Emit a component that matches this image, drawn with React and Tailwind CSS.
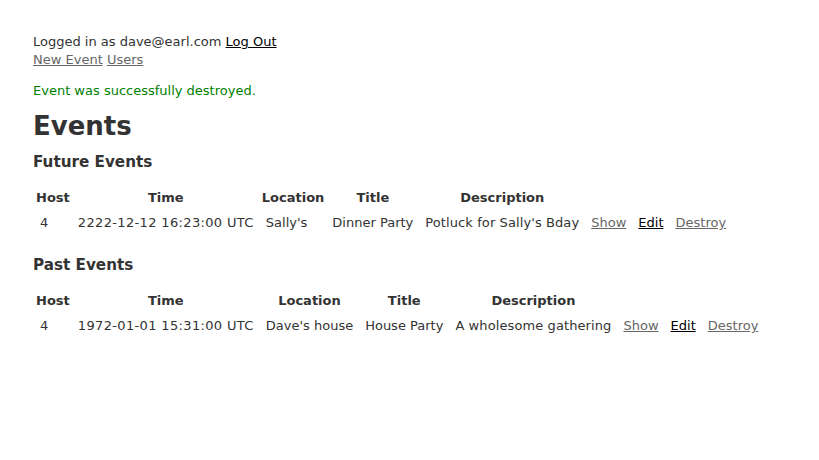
const futureEvents = [
  { host: 4, time: '2222-12-12 16:23:00 UTC', location: "Sally's", title: 'Dinner Party', description: "Potluck for Sally's Bday" },
]

const pastEvents = [
  { host: 4, time: '1972-01-01 15:31:00 UTC', location: "Dave's house", title: 'House Party', description: 'A wholesome gathering' },
]

function EventTable({ events }) {
  return (
    <table className="border-separate border-spacing-[2px]">
      <thead>
        <tr>
          {['Host', 'Time', 'Location', 'Title', 'Description'].map((h) => (
            <th key={h} className="px-px pt-px pb-[5px] text-center font-bold leading-[18px]">{h}</th>
          ))}
          <th colSpan={3}></th>
        </tr>
      </thead>
      <tbody>
        {events.map((e) => (
          <tr key={e.time}>
            <td className="px-[5px] pt-0 pb-[7px]">{e.host}</td>
            <td className="px-[5px] pt-0 pb-[7px] tracking-[0.35px]">{e.time}</td>
            <td className="px-[5px] pt-0 pb-[7px]">{e.location}</td>
            <td className="px-[5px] pt-0 pb-[7px]">{e.title}</td>
            <td className="px-[5px] pt-0 pb-[7px] tracking-[0.1px]">{e.description}</td>
            <td className="px-[5px] pt-0 pb-[7px]"><a href="#" className="text-[#666] underline">Show</a></td>
            <td className="px-[5px] pt-0 pb-[7px]"><a href="#" className="text-black underline">Edit</a></td>
            <td className="px-[5px] pt-0 pb-[7px]"><a href="#" className="text-[#666] underline">Destroy</a></td>
          </tr>
        ))}
      </tbody>
    </table>
  )
}

export default function App() {
  return (
    <div className="min-h-[460px] bg-white p-[33px] text-[13px] leading-[18px] text-[#333] font-['DejaVu_Sans',Verdana,sans-serif]">
      <div>
        Logged in as dave@earl.com <a href="#" className="text-black underline">Log Out</a>
      </div>
      <div>
        <a href="#" className="text-[#666] underline">New Event</a>{' '}
        <a href="#" className="text-[#666] underline">Users</a>
      </div>

      <p className="my-[13px] text-[#008000]">Event was successfully destroyed.</p>

      <h1 className="mt-[17px] mb-[18px] text-[26px] font-bold">Events</h1>

      <h3 className="my-[15px] text-[15.2px] font-bold">Future Events</h3>
      <EventTable events={futureEvents} />

      <h3 className="my-[15px] text-[15.2px] font-bold">Past Events</h3>
      <EventTable events={pastEvents} />
    </div>
  )
}
